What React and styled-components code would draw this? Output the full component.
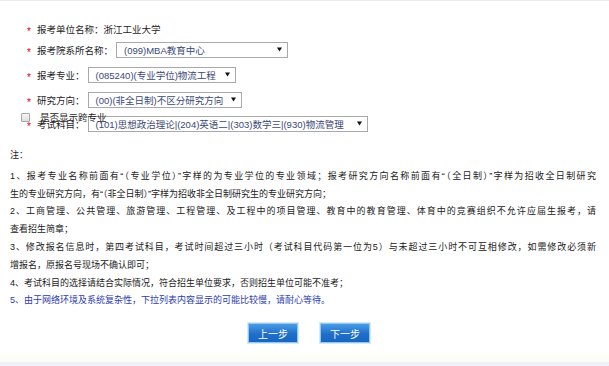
import React from "react";
import styled, { createGlobalStyle } from "styled-components";

const GlobalStyle = createGlobalStyle`
  html, body { margin: 0; padding: 0; background: #fff; }
  body { font-family: "Liberation Sans", "Noto Sans CJK SC", sans-serif; }
`;

const Page = styled.div`
  width: 609px;
  height: 366px;
  box-sizing: border-box;
  border-top: 1px solid #ebebeb;
  display: flex;
  flex-direction: column;
  overflow: hidden;
  background: #fff;
`;

const Form = styled.div`
  position: relative;
  padding: 20px 0 0 27px;
  display: flex;
  flex-direction: column;
`;

const Row = styled.div`
  display: flex;
  align-items: center;
  height: 16px;
  margin-top: ${(p) => p.$mt || 0}px;
  font-size: 9.5px;
  color: #1e1e1e;
`;

const Star = styled.span`
  color: #e60000;
  font-size: 10px;
  width: 10px;
  transform: translateY(2px);
`;

const Label = styled.span`
  white-space: nowrap;
  margin-right: 3px;
`;

const SelectBox = styled.div`
  width: ${(p) => p.$w}px;
  height: 16px;
  box-sizing: border-box;
  border: 1px solid #a9a9a9;
  background: #fff;
  display: flex;
  align-items: center;
  justify-content: space-between;
  padding: 0 5px 0 7px;
  color: #3a4874;
  font-size: 9.5px;
  white-space: nowrap;
  overflow: hidden;
`;

const Arrow = styled.svg`
  flex: none;
  width: 5px;
  height: 5px;
  margin-left: 4px;
  transform: translateY(-1px);
`;

const CheckLine = styled.div`
  position: absolute;
  left: 21px;
  top: 109px;
  display: flex;
  align-items: center;
  font-size: 9.5px;
  color: #1e1e1e;
`;

const CheckBox = styled.span`
  width: 9px;
  height: 9px;
  box-sizing: border-box;
  border: 1px solid #a8a8a8;
  border-radius: 1px;
  background: linear-gradient(#f6f6f6, #dedede);
  margin-right: 10px;
`;

const Notes = styled.div`
  margin: 15px 13px 0 10px;
  font-size: 9px;
  line-height: 17.8px;
  color: #222;
`;

const NoteHead = styled.div`
  margin-bottom: 3px;
`;

const NoteLine = styled.div`
  white-space: ${(p) => (p.$full ? "normal" : "nowrap")};
  text-align: ${(p) => (p.$full ? "justify" : "left")};
  text-align-last: ${(p) => (p.$full ? "justify" : "auto")};
  color: ${(p) => (p.$blue ? "#2b3bb0" : "inherit")};
`;

const ButtonBar = styled.div`
  display: flex;
  justify-content: center;
  gap: 22px;
  margin-top: 13px;
  padding-left: 9px;
`;

const Button = styled.button`
  width: 50px;
  height: 20px;
  box-sizing: border-box;
  border: 1px solid #8fc8f2;
  outline: 1px solid #d6ebfa;
  background: linear-gradient(#4a9ce6, #1f6fc9 55%, #1766c2);
  color: #fff;
  font-family: "Liberation Sans", "Noto Sans CJK SC", sans-serif;
  font-size: 10px;
  padding: 0;
  cursor: pointer;
`;

const Footer = styled.div`
  margin-top: auto;
  height: 16px;
  box-sizing: border-box;
  background: linear-gradient(#ffffff, #fbfdf2);
  border-bottom: 4px solid #eef1fa;
`;

function Select({ w, children }) {
  return (
    <SelectBox $w={w}>
      <span>{children}</span>
      <Arrow viewBox="0 0 5 5">
        <path d="M0 0.5 H5 L2.5 4.5 Z" fill="#111" />
      </Arrow>
    </SelectBox>
  );
}

const notes = [
  {
    text: "1、报考专业名称前面有“（专业学位）”字样的为专业学位的专业领域；报考研究方向名称前面有“（全日制）”字样为招收全日制研究",
    full: true,
  },
  { text: "生的专业研究方向，有“（非全日制）”字样为招收非全日制研究生的专业研究方向；" },
  {
    text: "2、工商管理、公共管理、旅游管理、工程管理、及工程中的项目管理、教育中的教育管理、体育中的竞赛组织不允许应届生报考，请",
    full: true,
  },
  { text: "查看招生简章；" },
  {
    text: "3、修改报名信息时，第四考试科目，考试时间超过三小时（考试科目代码第一位为5）与未超过三小时不可互相修改，如需修改必须新",
    full: true,
  },
  { text: "增报名，原报名号现场不确认即可；" },
  { text: "4、考试科目的选择请结合实际情况，符合招生单位要求，否则招生单位可能不准考；" },
  { text: "5、由于网络环境及系统复杂性，下拉列表内容显示的可能比较慢，请耐心等待。", blue: true },
];

export default function App() {
  return (
    <>
      <GlobalStyle />
      <Page>
        <Form>
          <Row>
            <Star>*</Star>
            <Label>报考单位名称：浙江工业大学</Label>
          </Row>
          <Row $mt={5}>
            <Star>*</Star>
            <Label>报考院系所名称：</Label>
            <Select w={172}>(099)MBA教育中心</Select>
          </Row>
          <Row $mt={9}>
            <Star>*</Star>
            <Label>报考专业：</Label>
            <Select w={148}>(085240)(专业学位)物流工程</Select>
          </Row>
          <Row $mt={9}>
            <Star>*</Star>
            <Label>研究方向：</Label>
            <Select w={154}>(00)(非全日制)不区分研究方向</Select>
          </Row>
          <Row $mt={8}>
            <Star>*</Star>
            <Label>考试科目：</Label>
            <Select w={280}>(101)思想政治理论|(204)英语二|(303)数学三|(930)物流管理</Select>
          </Row>
          <CheckLine>
            <CheckBox />
            <span>是否显示跨专业</span>
          </CheckLine>
        </Form>
        <Notes>
          <NoteHead>注：</NoteHead>
          {notes.map((n, i) => (
            <NoteLine key={i} $full={n.full} $blue={n.blue}>
              {n.text}
            </NoteLine>
          ))}
        </Notes>
        <ButtonBar>
          <Button>上一步</Button>
          <Button>下一步</Button>
        </ButtonBar>
        <Footer />
      </Page>
    </>
  );
}
